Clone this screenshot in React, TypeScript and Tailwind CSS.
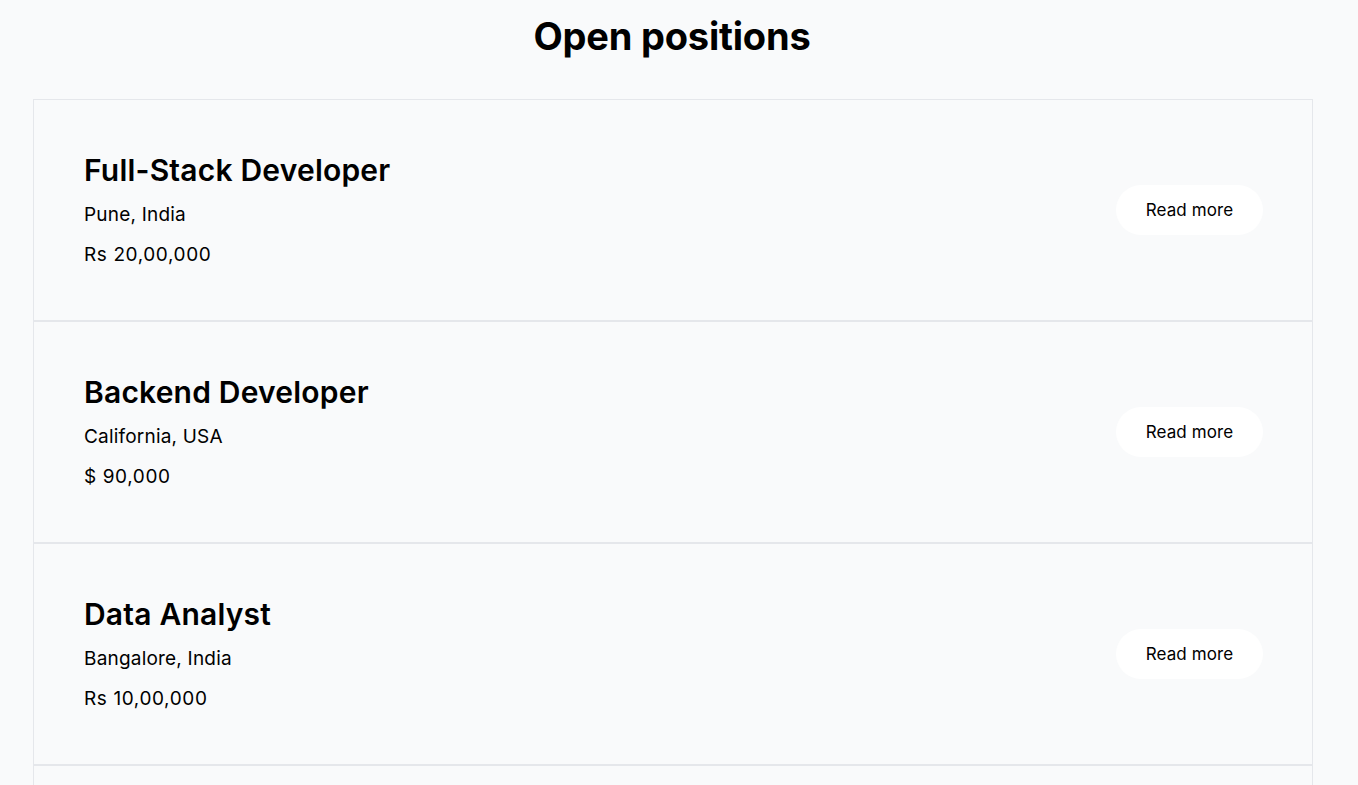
import React from "react";

const jobs = [
  { title: "Full-Stack Developer", location: "Pune, India", salary: "Rs 20,00,000" },
  { title: "Backend Developer", location: "California, USA", salary: "$ 90,000" },
  { title: "Data Analyst", location: "Bangalore, India", salary: "Rs 10,00,000" },
];

export default function App() {
  return (
    <div className="h-[785px] overflow-hidden bg-[#f9fafb] text-black font-['Inter',sans-serif]">
      <div className="w-[1344px]">
        <h1 className="pt-[13px] text-center text-[38px] font-bold leading-[46px] tracking-[-0.2px]">
          Open positions
        </h1>
        <div className="ml-[33px] mr-[31px] mt-[40px] border-x border-t border-[#e5e7eb]">
          {jobs.map((j) => (
            <div
              key={j.title}
              className="flex items-center justify-between border-b-2 border-[#e5e7eb] pl-[50px] pr-[49px] h-[222px]"
            >
              <div className="mb-[3px] flex flex-col">
                <h2 className="text-[30px] font-semibold leading-[40px] tracking-[0.2px]">{j.title}</h2>
                <p className="mt-[13px] text-[19px] leading-[24px] tracking-[0.2px]">{j.location}</p>
                <p className="mt-[16px] text-[19px] leading-[24px] tracking-[0.6px]">{j.salary}</p>
              </div>
              <button className="h-[50px] w-[147px] rounded-full bg-white pt-[2px] text-[17px] tracking-[0.1px]">
                Read more
              </button>
            </div>
          ))}
          <div className="h-[222px]" />
        </div>
      </div>
    </div>
  );
}
